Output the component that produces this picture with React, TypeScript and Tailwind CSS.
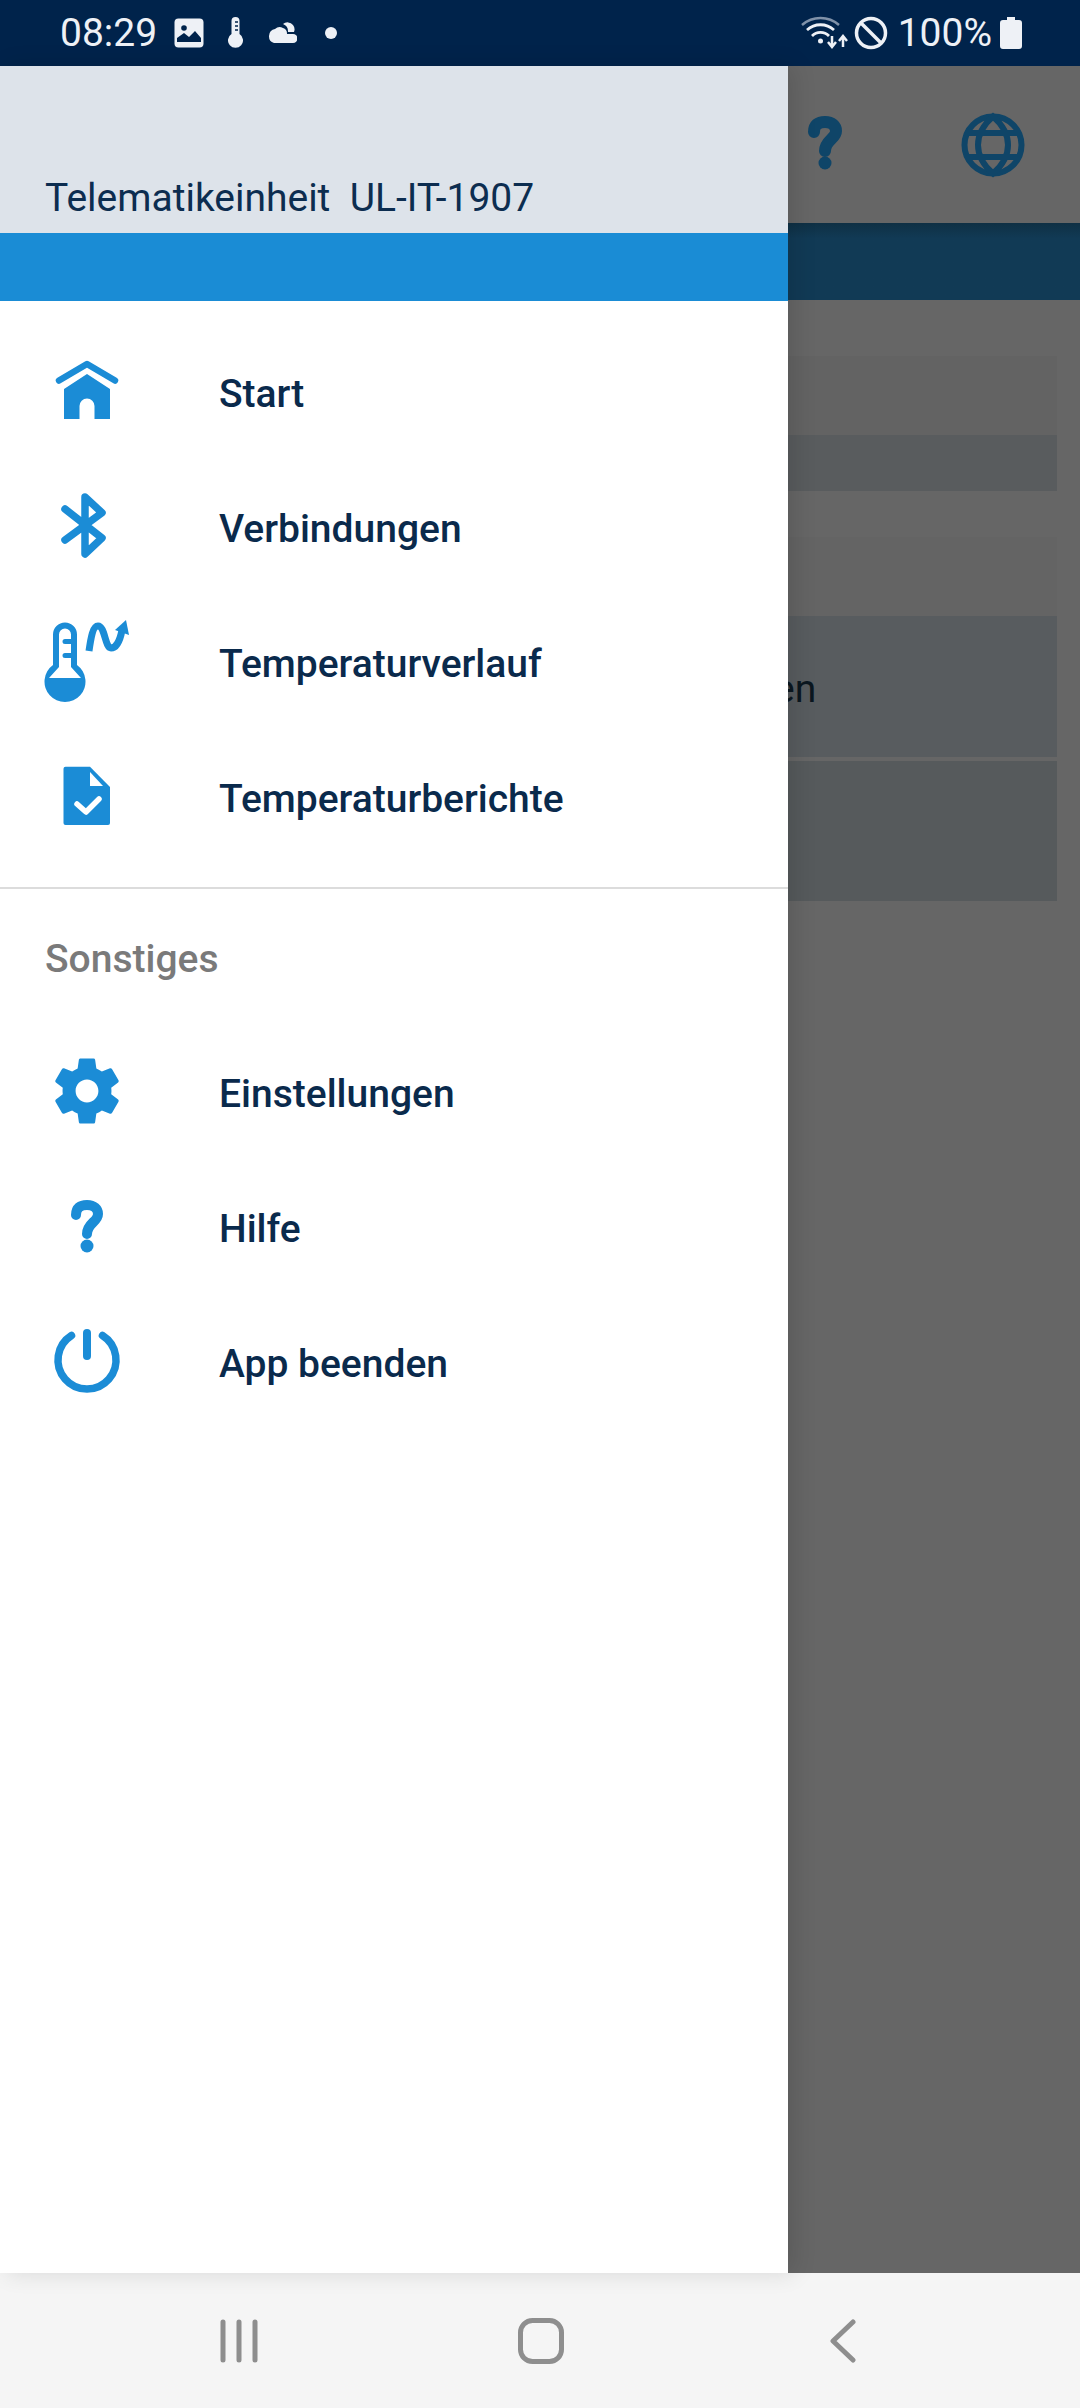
const BLUE = "#1b8cd6";

function HomeIcon() {
  return (
    <svg width="88" height="88" viewBox="0 0 88 88">
      <path d="M16 31.5 L44 15 L72 31.5" fill="none" stroke={BLUE} strokeWidth="6.5" strokeLinecap="round" strokeLinejoin="round" />
      <path fillRule="evenodd" fill={BLUE} d="M21 40 L44 25 L67 40 V70 H51.5 V57 A7.5 7.5 0 0 0 36.5 57 V70 H21 Z" />
    </svg>
  );
}

function BluetoothIcon() {
  return (
    <svg width="88" height="88" viewBox="0 0 88 88">
      <path d="M22 25 L59 54 L42 70 V13 L59 28.7 L22 56" fill="none" stroke={BLUE} strokeWidth="7.5" strokeLinecap="round" strokeLinejoin="round" />
    </svg>
  );
}

function TempCurveIcon() {
  return (
    <svg width="88" height="88" viewBox="0 0 88 88">
      <path fill={BLUE} d="M22 3.5 A12 12 0 0 1 34 15.5 V46 A20.500 20.500 0 1 1 10 46 V15.500 A12 12 0 0 1 22 3.5 Z" />
      <path fill="#fff" d="M22 9.500 A6 6 0 0 1 28 15.500 V20 H22 A2.500 2.500 0 0 0 22 25 H28 V34 H22 A2.500 2.500 0 0 0 22 39 H28 V48 L38 59 H6 L16 48 V15.500 A6 6 0 0 1 22 9.500 Z" />
      <path d="M46 32 C48 18 50 7 55 7 C62 7 62 29 68 29 C73 29 77 22 79 11" fill="none" stroke={BLUE} strokeWidth="7" />
      <path fill={BLUE} d="M83 1 L86 16 L72 11 Z" />
    </svg>
  );
}

function ReportIcon() {
  return (
    <svg width="88" height="88" viewBox="0 0 88 88">
      <path fill={BLUE} d="M22.500 12.700 H47 L67 33 V69 Q67 71 65 71 H22.500 Q20.500 71 20.500 69 V14.700 Q20.500 12.700 22.500 12.700 Z" />
      <path fill="#fff" d="M47 18 L60 32 H47 Z" />
      <path d="M34 50 L43 58 L56 45" fill="none" stroke="#fff" strokeWidth="5.500" strokeLinecap="round" strokeLinejoin="round" />
    </svg>
  );
}

function GearIcon() {
  return (
    <svg className="mt-[-2px]" width="88" height="88" viewBox="-1.5 -1.5 27 27">
      <path fill={BLUE} d="M19.430 12.980c.040-.320.070-.640.070-.980s-.030-.660-.070-.980l2.110-1.650c.190-.150.240-.420.120-.640l-2-3.460c-.120-.220-.390-.300-.610-.220l-2.490 1c-.520-.400-1.080-.730-1.690-.980l-.380-2.650A.488.488 0 0 0 14 2h-4c-.250 0-.460.180-.490.420l-.380 2.650c-.610.250-1.170.590-1.690.980l-2.490-1c-.230-.090-.490 0-.610.220l-2 3.460c-.130.220-.070.490.120.640l2.110 1.650c-.040.320-.070.650-.070.980s.030.660.070.980l-2.110 1.650c-.190.150-.240.420-.120.640l2 3.460c.120.220.390.300.610.220l2.490-1c.520.400 1.080.730 1.690.980l.380 2.650c.030.240.240.420.490.420h4c.250 0 .460-.180.490-.420l.380-2.650c.610-.250 1.170-.590 1.690-.980l2.490 1c.230.090.490 0 .610-.220l2-3.460c.120-.220.070-.490-.120-.640l-2.110-1.650zM12 15.500c-1.930 0-3.500-1.570-3.500-3.500s1.570-3.500 3.500-3.500 3.500 1.570 3.500 3.500-1.570 3.500-3.500 3.500z" />
    </svg>
  );
}

function QuestionIcon({ color, weight = 10 }: { color: string; weight?: number }) {
  return (
    <svg width="88" height="88" viewBox="0 0 88 88">
      <path d="M33 31 C33 24 37 21 44 21 C51 21 55 25 55 30 C55 38 44 39 44 50" fill="none" stroke={color} strokeWidth={weight} strokeLinecap="round" strokeLinejoin="round" />
      <circle cx="44" cy="62" r="6.500" fill={color} />
    </svg>
  );
}

function PowerIcon() {
  return (
    <svg width="88" height="88" viewBox="0 0 88 88">
      <path d="M28.500 16.500 A29 29 0 1 0 59.500 16.500" fill="none" stroke={BLUE} strokeWidth="7.500" strokeLinecap="round" />
      <path d="M44 14 V37" fill="none" stroke={BLUE} strokeWidth="8" strokeLinecap="round" />
    </svg>
  );
}

function GlobeIcon() {
  return (
    <svg width="66" height="66" viewBox="0 0 66 66" fill="none" stroke="#0f4568" strokeWidth="6">
      <circle cx="33" cy="33" r="28.500" />
      <path d="M33 4.500 C22 14 18 24 18 33 C18 42 22 52 33 61.500 C44 52 48 42 48 33 C48 24 44 14 33 4.500 Z" />
      <path d="M6 21 H60 M6 45 H60" />
    </svg>
  );
}

function StatusLeftIcons() {
  return (
    <div className="flex items-center">
      <svg className="ml-[17px]" width="30" height="30" viewBox="0 0 30 30">
        <rect width="29" height="29" x="0.500" y="0.500" rx="4" fill="#eef1f6" />
        <circle cx="10" cy="10" r="2.800" fill="#00234b" />
        <path d="M3 24 L3 20 L10 15 L15 19 L21 13 L27 20 L27 24 Z" fill="#00234b" />
      </svg>
      <svg className="ml-[24px]" width="15" height="33" viewBox="0 0 15 33">
        <path d="M7.500 0 A4 4 0 0 1 11.500 4 V17 A7.500 7.500 0 1 1 3.500 17 V4 A4 4 0 0 1 7.500 0 Z" fill="#eef1f6" />
        <path d="M7 5 H10 M7 9 H10 M7 13 H10" stroke="#00234b" strokeWidth="1.500" />
      </svg>
      <svg className="ml-[24px]" width="30" height="22" viewBox="0 0 30 22">
        <path d="M2 14 A7 7 0 0 1 8 7 A7 7 0 0 1 16 6 A6 6 0 0 1 20 12 H26 A4.500 4.500 0 0 1 26 21 H7 A7 7 0 0 1 2 14 Z" fill="#eef1f6" />
        <path d="M16 2 A7 7 0 0 1 26 3 A7 7 0 0 1 27 10 H21 A8 8 0 0 0 16 2 Z" fill="#eef1f6" />
      </svg>
      <div className="ml-[28px] w-3 h-3 rounded-full bg-[#eef1f6]" />
    </div>
  );
}

function StatusRightIcons() {
  return (
    <div className="flex items-center">
      <svg width="48" height="34" viewBox="0 0 48 34" fill="none">
        <path d="M1 9 A28 28 0 0 1 38 9" stroke="#7f91a8" strokeWidth="2.500" />
        <path d="M6 14 A20 20 0 0 1 33 14" stroke="#eef1f6" strokeWidth="2.800" />
        <path d="M11 20 A12 12 0 0 1 28 20" stroke="#eef1f6" strokeWidth="2.800" />
        <circle cx="19.500" cy="25" r="2.500" fill="#eef1f6" />
        <path d="M31 20 V30 M27 26 L31 31 L35 26" stroke="#eef1f6" strokeWidth="2.500" />
        <path d="M42 31 V21 M38 25 L42 20 L46 25" stroke="#eef1f6" strokeWidth="2.500" />
      </svg>
      <svg className="ml-[5px]" width="34" height="34" viewBox="0 0 34 34" fill="none" stroke="#eef1f6" strokeWidth="3.500">
        <circle cx="17" cy="17" r="14.500" />
        <path d="M7 7 L27 27" />
      </svg>
      <span className="ml-[10px] text-[39px] leading-none text-[#eef1f6]">100%</span>
      <svg className="ml-[8px]" width="22" height="32" viewBox="0 0 22 32">
        <path d="M7 0 H15 V3 H19 Q22 3 22 6 V29 Q22 32 19 32 H3 Q0 32 0 29 V6 Q0 3 3 3 H7 Z" fill="#eef1f6" />
      </svg>
    </div>
  );
}

function MenuRow({ icon, label }: { icon: React.ReactNode; label: string }) {
  return (
    <div className="flex items-center h-[135px] pl-[43px]">
      <div className="w-[88px] h-[88px] shrink-0">{icon}</div>
      <span className="ml-[88px] mt-[3px] text-[39px] font-medium text-[#0a2a4c] whitespace-nowrap">{label}</span>
    </div>
  );
}

function Drawer() {
  return (
    <div className="w-[788px] shrink-0 flex flex-col bg-white z-10 shadow-[6px_0_22px_rgba(0,0,0,0.12)]">
      <div className="h-[167px] bg-[#dde3ea] flex items-end pl-[45px] pb-[13px]">
        <span className="text-[39px] leading-[44px] text-[#0c2d50] whitespace-pre">{"Telematikeinheit  UL-IT-1907"}</span>
      </div>
      <div className="h-[68px] bg-[#1a8cd5]" />
      <div className="pt-[24px]">
        <MenuRow icon={<HomeIcon />} label="Start" />
        <MenuRow icon={<BluetoothIcon />} label="Verbindungen" />
        <MenuRow icon={<TempCurveIcon />} label="Temperaturverlauf" />
        <MenuRow icon={<ReportIcon />} label="Temperaturberichte" />
      </div>
      <div className="mt-[22px] h-[2px] bg-[#dcdcdc]" />
      <div className="h-[69px] mt-[36px] flex items-center pl-[45px] text-[39px] font-medium text-[#7a7a7a]">Sonstiges</div>
      <div className="pt-[31px]">
        <MenuRow icon={<GearIcon />} label="Einstellungen" />
        <MenuRow icon={<QuestionIcon color={BLUE} />} label="Hilfe" />
        <MenuRow icon={<PowerIcon />} label="App beenden" />
      </div>
    </div>
  );
}

function DimmedPage() {
  return (
    <div className="flex-1 min-w-0 overflow-hidden bg-[#666666]">
      <div className="h-[157px] flex items-center">
        <div className="ml-[-7px]"><QuestionIcon color="#0f4568" weight={12} /></div>
        <div className="ml-[91px]"><GlobeIcon /></div>
      </div>
      <div className="h-[77px] bg-gradient-to-b from-[#0f3044] to-[#113a55] to-[20%]" />
      <div className="pt-[56px] pr-[23px]">
        <div className="h-[79px] bg-[#636363]" />
        <div className="h-[56px] bg-[#595c5e]" />
        <div className="h-[79px] mt-[46px] bg-[#646464]" />
        <div className="h-[141px] bg-[#585c5f] flex items-center">
          <span className="ml-[-14px] mt-[6px] text-[39px] text-[#0b1720]">en</span>
        </div>
        <div className="h-[140px] mt-[4px] bg-[#565a5c]" />
      </div>
    </div>
  );
}

export default function App() {
  return (
    <div className="w-[1080px] h-[2408px] flex flex-col overflow-hidden font-['Roboto',sans-serif]">
      <div className="h-[66px] shrink-0 bg-[#00234b] flex items-center justify-between pl-[60px] pr-[58px]">
        <div className="flex items-center">
          <span className="text-[39px] leading-none text-[#eef1f6]">08:29</span>
          <StatusLeftIcons />
        </div>
        <StatusRightIcons />
      </div>

      <div className="flex-1 min-h-0 flex">
        <Drawer />
        <DimmedPage />
      </div>

      <div className="h-[135px] shrink-0 bg-[#f5f5f5] flex items-center pl-[88px]">
        <div className="w-[302px] flex justify-center">
          <svg width="38" height="44" viewBox="0 0 38 44" fill="none" stroke="#8e8e8e" strokeWidth="5" strokeLinecap="round">
            <path d="M3 3 V41 M19 3 V41 M35 3 V41" />
          </svg>
        </div>
        <div className="w-[302px] flex justify-center">
          <svg width="46" height="46" viewBox="0 0 46 46" fill="none" stroke="#8e8e8e" strokeWidth="5">
            <rect x="2.500" y="2.500" width="41" height="41" rx="12" />
          </svg>
        </div>
        <div className="w-[302px] flex justify-center">
          <svg width="26" height="44" viewBox="0 0 26 44" fill="none" stroke="#8e8e8e" strokeWidth="5" strokeLinecap="round" strokeLinejoin="round">
            <path d="M23 3 L3 22 L23 41" />
          </svg>
        </div>
      </div>
    </div>
  );
}
